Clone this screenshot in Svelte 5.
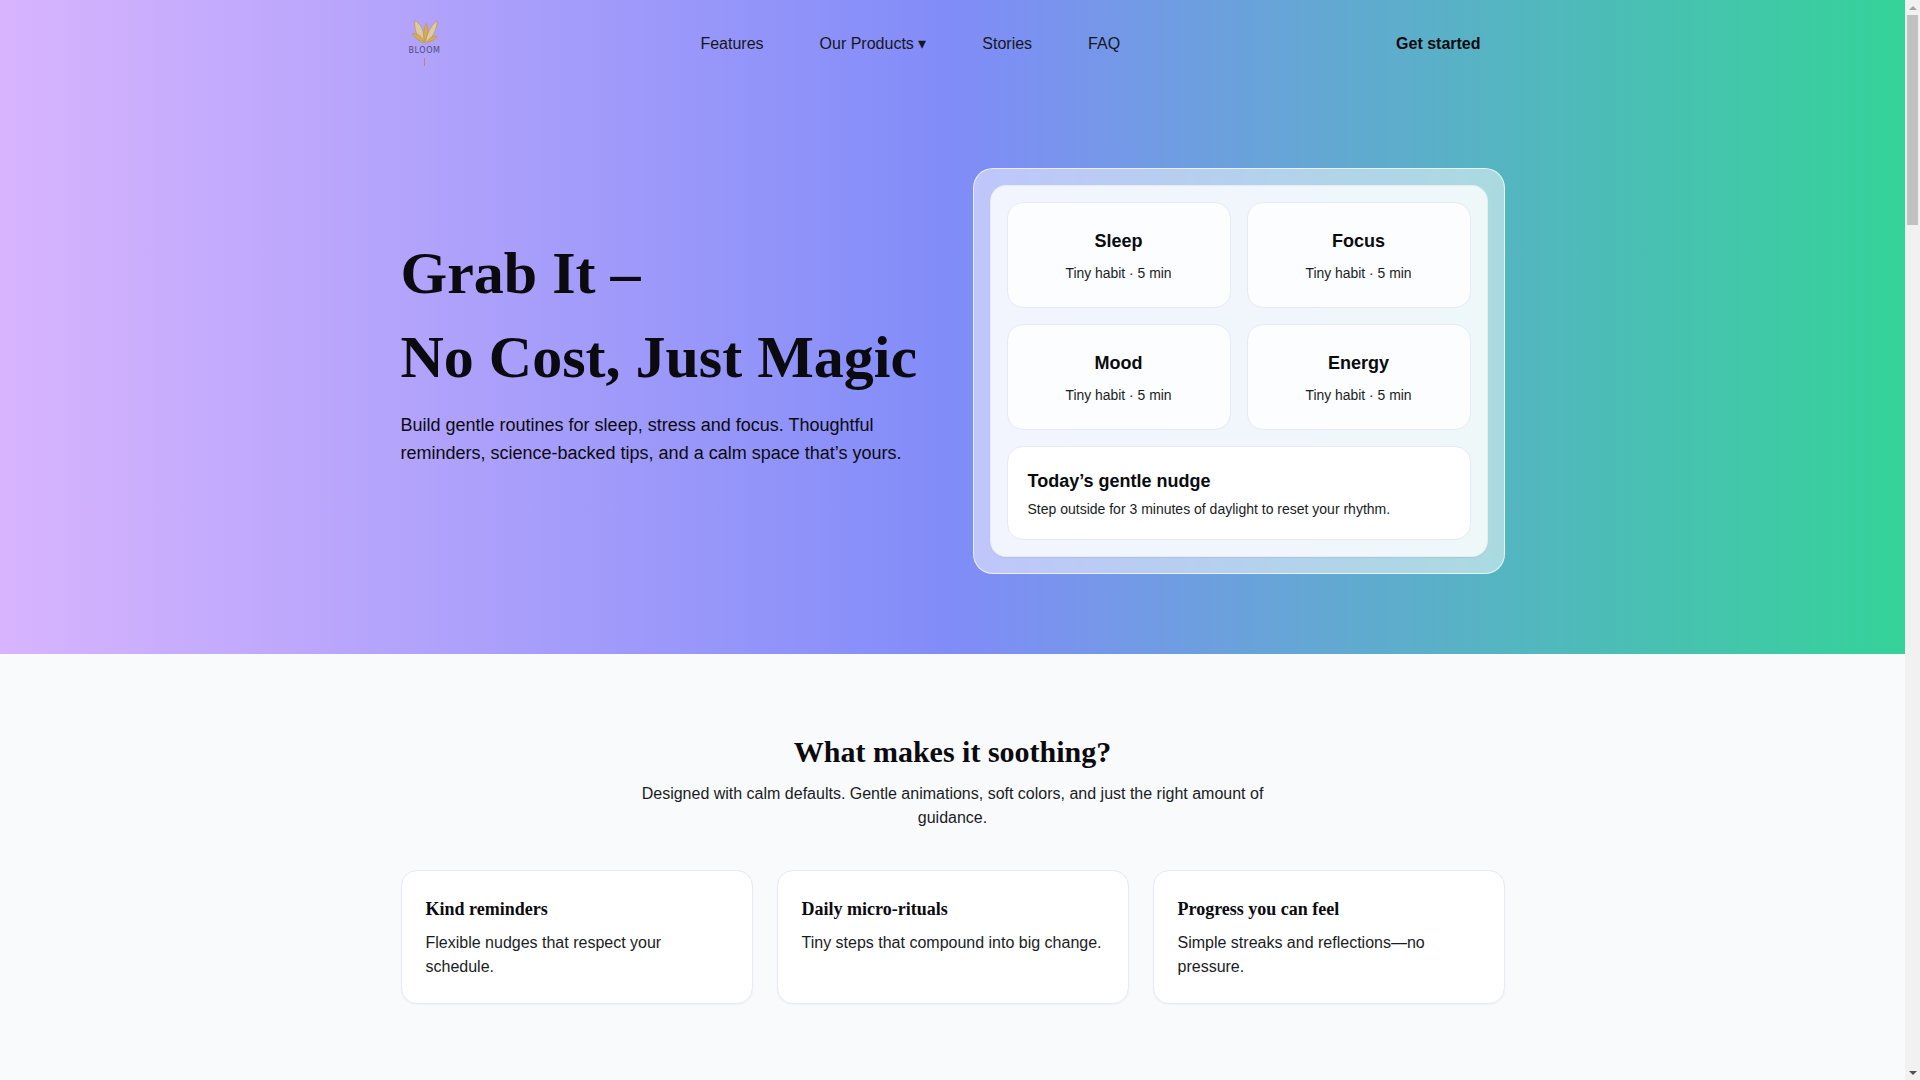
<script>
  const links = ["Features", "Our Products ▾", "Stories", "FAQ"];
  const habits = ["Sleep", "Focus", "Mood", "Energy"];
  const features = [
    { title: "Kind reminders", text: "Flexible nudges that respect your schedule." },
    { title: "Daily micro-rituals", text: "Tiny steps that compound into big change." },
    { title: "Progress you can feel", text: "Simple streaks and reflections—no pressure." },
  ];
</script>

<div class="shell">
  <main class="page">
    <div class="hero-wrap">
      <nav class="container nav">
        <a class="logo" href="#top" aria-label="Bloom">
          <svg width="26" height="26" viewBox="0 0 26 26" aria-hidden="true">
            <g stroke="#c2983f" stroke-width="0.7">
              <path d="M12 23.500 C6 20 2 10 2.800 0.500 C8.500 3 13 11 12 23.500 Z" fill="#dcc9a6" />
              <path d="M12.800 21.500 C10.500 15 12 8 14.500 3.500 C17 9 16 16 12.800 21.500 Z" fill="#d3aa5e" />
              <path d="M13.500 23.500 C14 15 19 5 25.200 0.500 C25.500 9 20 19 13.500 23.500 Z" fill="#dcc9a6" />
              <path d="M11.800 22 C7 21.500 3 18 0.300 13.500 C5.500 13 10 16 11.800 22 Z" fill="#d3aa5e" />
              <path d="M15 22 C17 18 21 16 25.200 16 C23 20 19 22 15 22 Z" fill="#d3aa5e" />
            </g>
          </svg>
          <span class="logo-name">BLOOM</span>
          <span class="logo-stem"></span>
        </a>
        <div class="links">
          {#each links as link}
            <a href="#top">{link}</a>
          {/each}
        </div>
        <a class="cta" href="#top">Get started</a>
      </nav>

      <section class="container hero">
        <div class="hero-copy">
          <h1>Grab It –<br />No Cost, Just Magic</h1>
          <p>Build gentle routines for sleep, stress and focus. Thoughtful reminders, science-backed tips, and a calm space that’s yours.</p>
        </div>
        <div class="glass">
          <div class="panel">
            <div class="habits">
              {#each habits as habit}
                <div class="habit">
                  <h3>{habit}</h3>
                  <p>Tiny habit · 5 min</p>
                </div>
              {/each}
            </div>
            <div class="nudge">
              <h3>Today’s gentle nudge</h3>
              <p>Step outside for 3 minutes of daylight to reset your rhythm.</p>
            </div>
          </div>
        </div>
      </section>
    </div>

    <section class="container soothing">
      <h2>What makes it soothing?</h2>
      <p class="lead">Designed with calm defaults. Gentle animations, soft colors, and just the right amount of guidance.</p>
      <div class="features">
        {#each features as f}
          <div class="feature">
            <h4>{f.title}</h4>
            <p>{f.text}</p>
          </div>
        {/each}
      </div>
    </section>
  </main>

  <div class="scrollbar" aria-hidden="true">
    <span class="arrow up"></span>
    <span class="track"><span class="thumb"></span></span>
    <span class="arrow down"></span>
  </div>
</div>

<style>
  :global(body) {
    margin: 0;
    background: #f9fafc;
    color: #0b0b0f;
    font-family: "Liberation Sans", Arial, sans-serif;
    font-size: 16px;
    line-height: 1.5;
  }

  .shell {
    display: flex;
    height: 100vh;
    overflow: hidden;
  }

  .page {
    flex: 1;
    min-width: 0;
    height: 100%;
    overflow: hidden;
  }

  .scrollbar {
    flex: none;
    width: 15px;
    display: flex;
    flex-direction: column;
    align-items: center;
    background: #f1f1f1;
  }
  .arrow {
    flex: none;
    width: 15px;
    height: 15px;
    display: flex;
    align-items: center;
    justify-content: center;
  }
  .arrow::before {
    content: "";
    border-left: 4px solid transparent;
    border-right: 4px solid transparent;
  }
  .arrow.up::before {
    border-bottom: 4px solid #a3a3a3;
  }
  .arrow.down::before {
    border-top: 4px solid #505050;
  }
  .track {
    flex: 1;
  }
  .thumb {
    display: block;
    width: 11px;
    height: 210px;
    background: #c1c1c1;
  }

  .container {
    max-width: 1104px;
    margin: 0 auto;
    box-sizing: content-box;
    padding: 0 48px;
  }

  .hero-wrap {
    background: linear-gradient(90deg, #d8b4fe, #818cf8 50%, #34d399);
  }

  .nav {
    display: flex;
    align-items: center;
    justify-content: space-between;
    height: 88px;
  }

  .logo {
    width: 48px;
    height: 64px;
    display: flex;
    flex-direction: column;
    align-items: center;
    padding-top: 8px;
    box-sizing: border-box;
    text-decoration: none;
  }
  .logo svg {
    flex: none;
  }
  .logo-name {
    font-family: "DejaVu Sans", sans-serif;
    font-size: 8px;
    line-height: 10px;
    letter-spacing: 0.6px;
    color: #4f4a78;
  }
  .logo-stem {
    width: 1px;
    height: 8px;
    margin-top: 2px;
    background: #b98a5a;
  }

  .links {
    display: flex;
    gap: 56px;
  }
  .links a {
    color: #16161d;
    text-decoration: none;
  }

  .cta {
    padding: 10px 24px;
    font-weight: 700;
    color: #0b0b0f;
    text-decoration: none;
  }

  .hero {
    display: grid;
    grid-template-columns: 1fr 1fr;
    gap: 40px;
    align-items: center;
    padding-top: 80px;
    padding-bottom: 80px;
  }

  h1 {
    margin: 0 0 12px;
    font-family: "Liberation Serif", "Times New Roman", serif;
    font-size: 60px;
    line-height: 84px;
    font-weight: 700;
  }

  .hero-copy p {
    margin: 0 0 44px;
    font-size: 18px;
    line-height: 28px;
  }

  .glass {
    padding: 16px;
    border: 1px solid rgba(255, 255, 255, 0.7);
    border-radius: 20px;
    background: rgba(255, 255, 255, 0.5);
  }

  .panel {
    padding: 16px;
    border: 1px solid rgba(226, 232, 240, 0.8);
    border-radius: 16px;
    background: rgba(255, 255, 255, 0.8);
    box-shadow: 0 1px 2px rgba(15, 23, 42, 0.06);
  }

  .habits {
    display: grid;
    grid-template-columns: 1fr 1fr;
    gap: 16px;
  }

  .habit {
    padding: 25px 16px 23px;
    border: 1px solid #e5eaf4;
    border-radius: 16px;
    background: #fcfdff;
    text-align: center;
  }
  .habit h3 {
    margin: 0 0 8px;
    font-size: 18px;
    line-height: 27px;
  }
  .habit p {
    margin: 0;
    font-size: 13.92px;
    line-height: 21px;
    color: #1a1c24;
  }

  .nudge {
    margin-top: 16px;
    padding: 21px 20px 19px;
    border: 1px solid #e5eaf4;
    border-radius: 16px;
    background: #fff;
  }
  .nudge h3 {
    margin: 0 0 4px;
    font-size: 18px;
    line-height: 27px;
  }
  .nudge p {
    margin: 0;
    font-size: 14px;
    line-height: 21px;
    color: #1a1c24;
  }

  .soothing {
    padding-top: 75px;
    text-align: center;
  }

  h2 {
    margin: 0 0 8px;
    font-family: "Liberation Serif", "Times New Roman", serif;
    font-size: 30px;
    line-height: 45px;
  }

  .lead {
    max-width: 640px;
    margin: 0 auto 40px;
    color: #1a1c24;
  }

  .features {
    display: grid;
    grid-template-columns: repeat(3, 1fr);
    gap: 24px;
    text-align: left;
  }

  .feature {
    padding: 25px 24px 24px;
    border: 1px solid #e5eaf4;
    border-radius: 16px;
    background: #fff;
    box-shadow: 0 1px 2px rgba(15, 23, 42, 0.04);
  }
  .feature h4 {
    margin: 0 0 8px;
    font-family: "Liberation Serif", "Times New Roman", serif;
    font-size: 18px;
    line-height: 27px;
  }
  .feature p {
    margin: 0;
    line-height: 24px;
    color: #1a1c24;
  }
</style>
